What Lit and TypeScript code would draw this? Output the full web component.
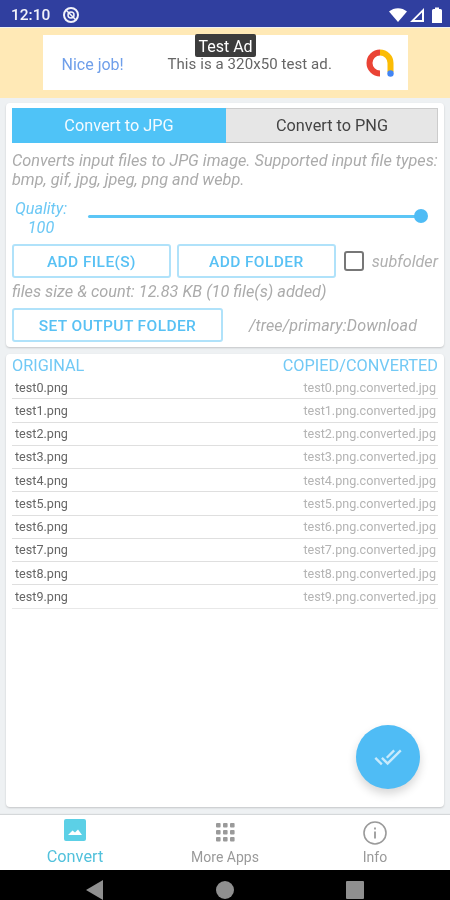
import { LitElement, html, css, svg } from "lit";
import { customElement } from "lit/decorators.js";

const files = Array.from({ length: 10 }, (_, i) => `test${i}.png`);

@customElement("app-root")
export class AppRoot extends LitElement {
  static styles = css`
    :host {
      display: flex;
      flex-direction: column;
      width: 450px;
      height: 900px;
      overflow: hidden;
      position: relative;
      background: #eef1f3;
      font-family: Roboto, "Liberation Sans", sans-serif;
      filter: blur(0.45px);
    }
    .status {
      height: 27px;
      flex: none;
      background: #303f9f;
      color: #f2f3fa;
      display: flex;
      align-items: center;
      padding: 3px 7px 0 11px;
      font-size: 15.5px;
      box-sizing: border-box;
    }
    .status .time { margin-right: 12px; font-weight: 500; }
    .status .right { margin-left: auto; display: flex; align-items: center; gap: 3px; }
    .status svg { display: block; }
    .adband {
      flex: none;
      height: 70px;
      background: #ffe9b6;
      display: flex;
      justify-content: center;
      padding-top: 7px;
      box-sizing: border-box;
      position: relative;
      margin-top: 1px;
    }
    .ad {
      width: 365px;
      height: 55px;
      background: #fff;
      display: flex;
      align-items: center;
      padding: 3px 13px 0 19px;
      box-sizing: border-box;
      font-size: 15px;
      color: #666;
    }
    .nice { color: #6f9fea; width: 106px; font-size: 16px; }
    .adtext { flex: 1; letter-spacing: 0.08px; }
    .badge {
      position: absolute;
      left: 195px;
      top: 6px;
      width: 61px;
      height: 23px;
      background: #3c3c3c;
      color: #fff;
      border-radius: 2px;
      font-size: 16px;
      line-height: 25px;
      text-align: center;
    }
    .main {
      flex: 1;
      display: flex;
      flex-direction: column;
      gap: 7px;
      padding: 5px 6px 8px;
      min-height: 0;
    }
    .card {
      background: #fff;
      border-radius: 4px;
      box-shadow: 0 1px 2px rgba(0, 0, 0, 0.18);
      padding: 5px 6px;
    }
    .card.top { height: 244px; box-sizing: border-box; flex: none; }
    .card.list { flex: 1; padding-top: 3px; box-sizing: border-box; }
    .tabs { display: flex; height: 35px; font-size: 16.3px; }
    .tab { display: flex; align-items: center; justify-content: center; }
    .tab.on { width: 214px; background: #4fc3f7; color: #f4fbff; }
    .tab.off {
      flex: 1;
      background: #e6e6e6;
      color: #444;
      box-shadow: inset 0 -1px 0 #bbb, inset 0 1px 0 #ccc, inset -1px 0 0 #ccc;
    }
    .desc {
      margin-top: 8px;
      font-size: 16.3px;
      line-height: 19px;
      font-style: italic;
      color: #ababab;
      white-space: nowrap;
    }
    .quality { display: flex; align-items: center; height: 41px; margin-top: 8px; }
    .qlabel {
      width: 58px;
      text-align: center;
      font-style: italic;
      font-size: 16.2px;
      line-height: 19px;
      color: #6cc8f5;
    }
    .slider {
      margin-left: 18px;
      width: 333px;
      height: 3px;
      background: #5cc6f6;
      border-radius: 2px;
      position: relative;
      margin-top: -3px;
    }
    .thumb {
      position: absolute;
      right: -7px;
      top: -5.5px;
      width: 14px;
      height: 14px;
      border-radius: 50%;
      background: #4fbcf5;
    }
    .btnrow { display: flex; align-items: center; margin-top: 6px; }
    .btn {
      height: 34px;
      box-sizing: border-box;
      border: 2px solid #b0e2fa;
      border-radius: 3px;
      padding-top: 2px;
      display: flex;
      align-items: center;
      justify-content: center;
      font-size: 15.5px;
      font-weight: 500;
      color: #58c1f4;
      letter-spacing: 0.4px;
      background: #fff;
    }
    .b1 { width: 159px; }
    .b2 { width: 159px; margin-left: 6px; }
    .check {
      width: 20px;
      height: 20px;
      box-sizing: border-box;
      border: 2px solid #777;
      border-radius: 3px;
      margin-left: 8px;
    }
    .sub {
      margin-left: 8px;
      font-style: italic;
      font-size: 16.2px;
      color: #b0b0b0;
    }
    .size {
      margin-top: 4px;
      font-size: 16.3px;
      line-height: 19px;
      font-style: italic;
      color: #ababab;
    }
    .outrow { display: flex; align-items: center; margin-top: 7px; }
    .b3 { width: 211px; padding-top: 1px; }
    .path {
      margin-left: 26px;
      font-style: italic;
      font-size: 16.1px;
      color: #ababab;
      letter-spacing: 0.1px;
    }
    .head {
      display: flex;
      justify-content: space-between;
      font-size: 16.3px;
      line-height: 18px;
      color: #72c9f5;
    }
    .row {
      display: flex;
      justify-content: space-between;
      align-items: center;
      height: 23.25px;
      box-sizing: border-box;
      padding: 0 2px 0 3px;
      font-size: 12.6px;
      border-bottom: 1px solid #dfdfdf;
    }
    .row:last-child { border-bottom: 1px solid #e8e8e8; }
    .rows { margin-top: 1px; }
    .row .a { color: #666; }
    .row .b { color: #b4b4b4; }
    .fab {
      position: absolute;
      left: 356px;
      top: 725px;
      width: 64px;
      height: 64px;
      border-radius: 50%;
      background: #4fbcf5;
      box-shadow: 0 5px 10px rgba(0, 0, 0, 0.16);
      display: flex;
      align-items: center;
      justify-content: center;
    }
    .fab svg { opacity: 0.8; }
    .nav {
      flex: none;
      height: 55px;
      background: #fff;
      display: flex;
      box-shadow: 0 -1px 1px rgba(0, 0, 0, 0.1);
    }
    .item {
      flex: 1;
      display: flex;
      flex-direction: column;
      align-items: center;
      padding-top: 4px;
      font-size: 14px;
      line-height: 18px;
      color: #9a9a9a;
      box-sizing: border-box;
    }
    .item svg { display: block; height: 24px; margin-bottom: 5px; overflow: visible; }
    .item.on { color: #52c1dc; font-size: 16.3px; line-height: 18px; }
    .sys {
      flex: none;
      height: 30px;
      background: #000;
      display: flex;
      align-items: center;
      justify-content: space-between;
      padding: 10px 86px 0 86px;
      box-sizing: border-box;
    }
  `;

  render() {
    return html`
      <div class="status">
        <span class="time">12:10</span>
        <svg width="18" height="18" viewBox="0 0 18 18" fill="none" stroke="#f2f3fa">
          <circle cx="9" cy="9" r="7" stroke-width="2"></circle>
          <circle cx="9" cy="9" r="3" stroke-width="1.5"></circle>
          <path d="M4 4L14 14" stroke-width="1.5"></path>
        </svg>
        <span class="right">
          <svg width="18" height="14" viewBox="0 0 18 14"><path d="M0 3.5C5 -1 13 -1 18 3.5L9 14Z" fill="#fff"></path></svg>
          <svg width="14" height="14" viewBox="0 0 14 14"><path d="M14 0V14H0ZM12 4.5L4.5 12H12Z" fill="#fff" fill-rule="evenodd"></path></svg>
          <svg width="12" height="16" viewBox="0 0 12 16" style="margin-left:4px"><path d="M1 3.5Q1 2 2.5 2H4V0.5H8V2H9.5Q11 2 11 3.5V16H1Z" fill="#fff"></path></svg>
        </span>
      </div>
      <div class="adband">
        <div class="ad">
          <span class="nice">Nice job!</span>
          <span class="adtext">This is a 320x50 test ad.</span>
          <svg width="30" height="30" viewBox="0 0 30 30" fill="none" stroke-width="6">
            <path d="M25.5 23V14A10.5 10.5 0 0 0 15 3.5" stroke="#fbbc04"></path>
            <path d="M15 3.5A10.5 10.5 0 0 0 15 24.5" stroke="#ea4335"></path>
            <circle cx="25.5" cy="24.5" r="3.2" fill="#4285f4" stroke="none"></circle>
          </svg>
        </div>
        <div class="badge">Test Ad</div>
      </div>
      <div class="main">
        <div class="card top">
          <div class="tabs">
            <div class="tab on">Convert to JPG</div>
            <div class="tab off">Convert to PNG</div>
          </div>
          <div class="desc">Converts input files to JPG image. Supported input file types:<br />bmp, gif, jpg, jpeg, png and webp.</div>
          <div class="quality">
            <div class="qlabel">Quality:<br />100</div>
            <div class="slider"><div class="thumb"></div></div>
          </div>
          <div class="btnrow">
            <div class="btn b1">ADD FILE(S)</div>
            <div class="btn b2">ADD FOLDER</div>
            <div class="check"></div>
            <span class="sub">subfolder</span>
          </div>
          <div class="size">files size &amp; count: 12.83 KB (10 file(s) added)</div>
          <div class="outrow">
            <div class="btn b3">SET OUTPUT FOLDER</div>
            <span class="path">/tree/primary:Download</span>
          </div>
        </div>
        <div class="card list">
          <div class="head"><span>ORIGINAL</span><span>COPIED/CONVERTED</span></div>
          <div class="rows">
            ${files.map(
              (f) => html`<div class="row"><span class="a">${f}</span><span class="b">${f}.converted.jpg</span></div>`
            )}
          </div>
        </div>
      </div>
      <div class="fab">
        <svg width="28" height="28" viewBox="0 0 24 24" fill="#e6f6fe">
          <path d="M18 7l-1.41-1.41-6.34 6.34 1.41 1.41L18 7zm4.24-1.41L11.66 16.17 7.48 12l-1.41 1.41L11.66 19l12-12-1.42-1.41zM.41 13.41L6 19l1.41-1.41L1.83 12 .41 13.41z"></path>
        </svg>
      </div>
      <div class="nav">
        <div class="item on">
          <svg width="24" height="24" viewBox="0 0 24 24">
            <path d="M3 0H21A2 2 0 0 1 23 2V20A2 2 0 0 1 21 22H3A2 2 0 0 1 1 20V2A2 2 0 0 1 3 0ZM5 16H19L15 10.5L12 13.5L9.5 11.5Z" fill="#5cd0e6" fill-rule="evenodd"></path>
          </svg>
          Convert
        </div>
        <div class="item">
          <svg width="24" height="24" viewBox="0 0 24 24" fill="#9a9a9a">
            ${[4, 11, 18].flatMap((y) =>
              [3, 10, 17].map((x) => svg`<rect x=${x} y=${y} width="4.6" height="4.6" rx="1"></rect>`)
            )}
          </svg>
          More Apps
        </div>
        <div class="item">
          <svg width="24" height="24" viewBox="0 0 24 24" fill="none" stroke="#9a9a9a" stroke-width="1.6">
            <circle cx="12" cy="14" r="11"></circle>
            <path d="M12 12.5V19.5M12 8.5V10.5" stroke-width="1.8"></path>
          </svg>
          Info
        </div>
      </div>
      <div class="sys">
        <svg width="18" height="20" viewBox="0 0 18 20"><path d="M17 0V20L0 10Z" fill="#8f8f8f"></path></svg>
        <svg width="18" height="18" viewBox="0 0 18 18"><circle cx="9" cy="9" r="9" fill="#8f8f8f"></circle></svg>
        <svg width="18" height="18" viewBox="0 0 18 18"><rect width="18" height="18" rx="1" fill="#8f8f8f"></rect></svg>
      </div>
    `;
  }
}
